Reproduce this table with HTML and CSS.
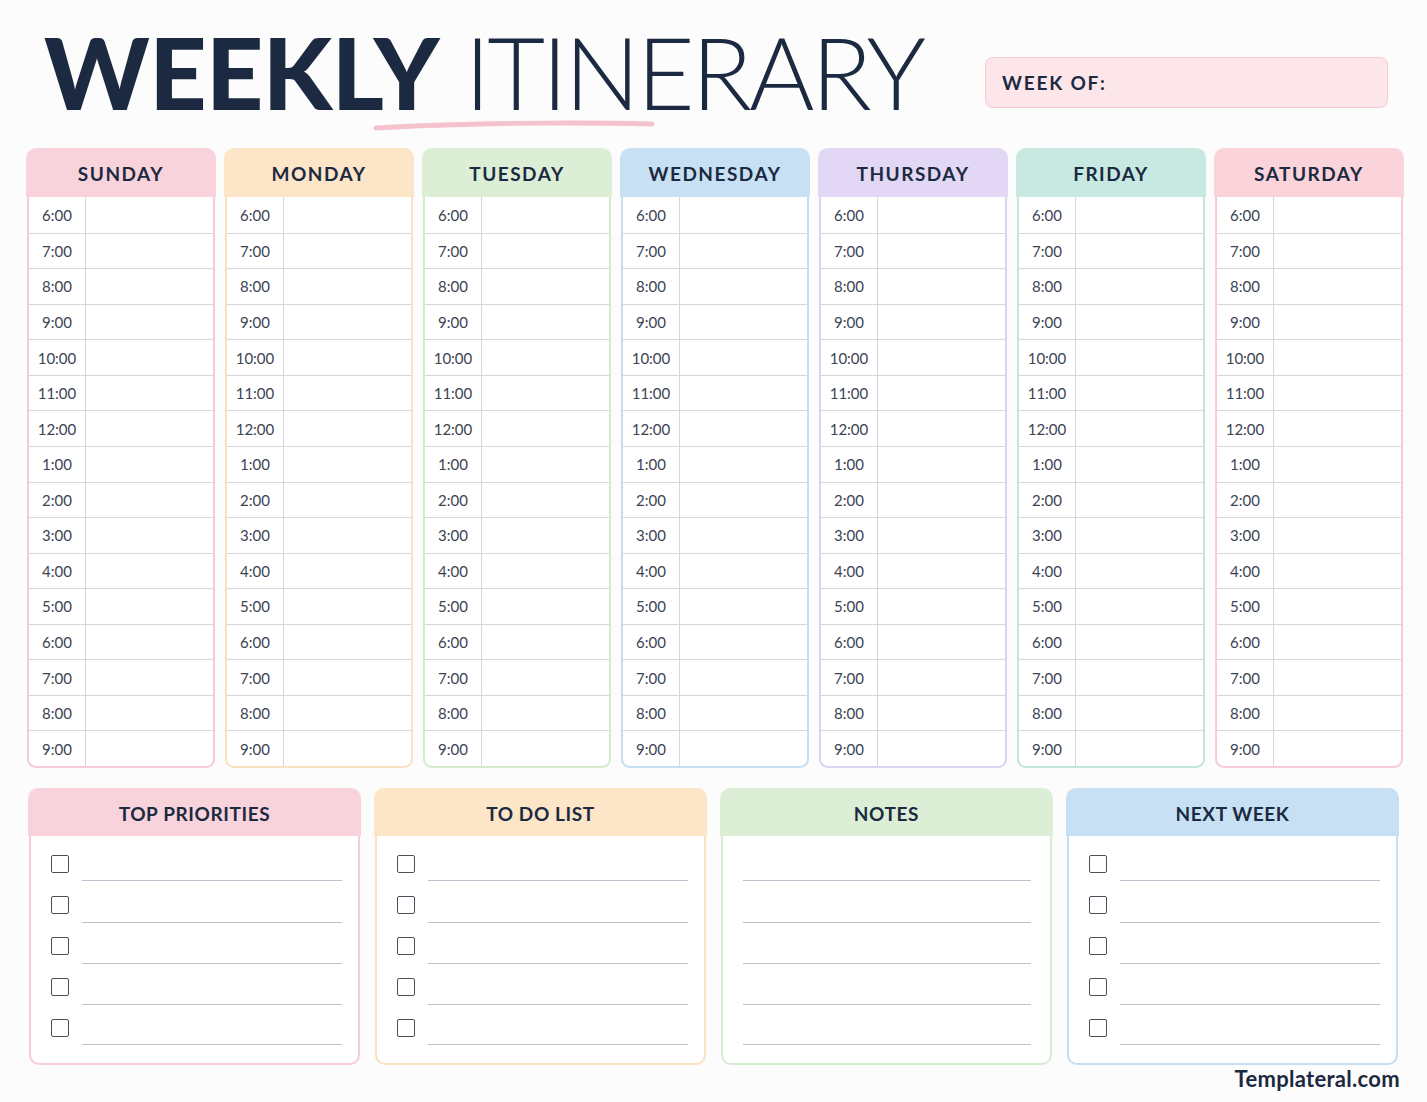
FILE: index.html
```html
<!DOCTYPE html>
<html lang="en">
<head>
<meta charset="utf-8">
<title>Weekly Itinerary</title>
<link rel="stylesheet" href="styles.css">
</head>
<body>
<div class="page">
  <header class="top">
    <div class="title-wrap">
      <h1 class="title"><span class="bold">WEEKLY</span> <span class="light">ITINERARY</span></h1>
      <svg class="swoosh" width="282" height="14" viewBox="0 0 282 14"><path d="M3 9 C 80 4, 200 3, 279 5" fill="none" stroke="#f5c3ce" stroke-width="5" stroke-linecap="round"/></svg>
    </div>
    <div class="week-of">WEEK OF:</div>
  </header>

  <section class="days">
    <div class="day sun"><div class="day-head">SUNDAY</div><div class="day-body"></div></div>
    <div class="day mon"><div class="day-head">MONDAY</div><div class="day-body"></div></div>
    <div class="day tue"><div class="day-head">TUESDAY</div><div class="day-body"></div></div>
    <div class="day wed"><div class="day-head">WEDNESDAY</div><div class="day-body"></div></div>
    <div class="day thu"><div class="day-head">THURSDAY</div><div class="day-body"></div></div>
    <div class="day fri"><div class="day-head">FRIDAY</div><div class="day-body"></div></div>
    <div class="day sat"><div class="day-head">SATURDAY</div><div class="day-body"></div></div>
  </section>

  <section class="panels">
    <div class="panel p-pink"><div class="panel-head">TOP PRIORITIES</div><ul class="panel-body checks"></ul></div>
    <div class="panel p-peach"><div class="panel-head">TO DO LIST</div><ul class="panel-body checks"></ul></div>
    <div class="panel p-green"><div class="panel-head">NOTES</div><ul class="panel-body lines"></ul></div>
    <div class="panel p-blue"><div class="panel-head">NEXT WEEK</div><ul class="panel-body checks"></ul></div>
  </section>

  <footer class="brand">Templateral.com</footer>
</div>
<script>
  var times = ["6:00","7:00","8:00","9:00","10:00","11:00","12:00","1:00","2:00","3:00","4:00","5:00","6:00","7:00","8:00","9:00"];
  document.querySelectorAll('.day-body').forEach(function (b) {
    times.forEach(function (t) {
      var r = document.createElement('div'); r.className = 'slot';
      var a = document.createElement('div'); a.className = 'time'; a.textContent = t;
      var c = document.createElement('div'); c.className = 'fill';
      r.appendChild(a); r.appendChild(c); b.appendChild(r);
    });
  });
  document.querySelectorAll('.panel-body').forEach(function (ul) {
    var check = ul.classList.contains('checks');
    for (var i = 0; i < 5; i++) {
      var li = document.createElement('li'); li.className = 'item';
      if (check) { var box = document.createElement('span'); box.className = 'box'; li.appendChild(box); }
      var ln = document.createElement('span'); ln.className = 'rule'; li.appendChild(ln);
      ul.appendChild(li);
    }
  });
</script>
</body>
</html>
```

FILE: styles.css
```css
* { box-sizing: border-box; }
html, body { margin: 0; padding: 0; }
body {
  background: #fcfcfd;
  font-family: "Lato", "Noto Sans", sans-serif;
  color: #1b2a41;
  width: 1427px;
  height: 1102px;
  overflow: hidden;
}
.page { width: 1427px; }

/* Top */
.top {
  height: 148px;
  display: flex;
  justify-content: space-between;
  align-items: flex-start;
  padding: 21px 39px 0 44px;
}
.title-wrap { display: flex; flex-direction: column; }
.title {
  margin: 0;
  font-size: 100px;
  line-height: 100px;
  white-space: nowrap;
  color: #1b2a41;
  font-weight: 400;
}
.title .bold { font-weight: 900; letter-spacing: -0.6px; }
.title .light { font-weight: 300; letter-spacing: -3.3px; }
.swoosh { display: block; margin: -2px 0 0 329px; }
.week-of {
  margin-top: 36px;
  width: 403px;
  height: 51px;
  background: #fde6ea;
  border: 1.5px solid #f7c9d1;
  border-radius: 8px;
  padding-left: 16px;
  display: flex;
  align-items: center;
  font-size: 19px;
  font-weight: 700;
  letter-spacing: 1.8px;
  color: #1b2a41;
}

/* Days */
.days {
  display: grid;
  grid-template-columns: repeat(7, 190px);
  column-gap: 8px;
  padding-left: 26px;
}
.day { display: flex; flex-direction: column; }
.day-head {
  height: 49px;
  border-radius: 10px 10px 0 0;
  display: flex;
  align-items: center;
  justify-content: center;
  font-size: 19px;
  font-weight: 700;
  letter-spacing: 1.5px;
  color: #1b2a41;
  padding-top: 1px;
}
.day-body {
  margin: 0 1px;
  height: 571px;
  background: #fff;
  border: 2px solid;
  border-top: 0;
  border-radius: 0 0 9px 9px;
  display: grid;
  grid-template-rows: repeat(16, 1fr);
  overflow: hidden;
}
.slot {
  display: grid;
  grid-template-columns: 57px 1fr;
  border-top: 1.5px solid #d4d7df;
}
.slot:first-child { border-top: 0; }
.time {
  border-right: 1.5px solid #d4d7df;
  display: flex;
  align-items: center;
  justify-content: center;
  font-size: 15px;
  color: #3c4353;
}
.sun .day-head { background: #f9d3db; } .sun .day-body { border-color: #f6cbd3; }
.mon .day-head { background: #fde5c8; } .mon .day-body { border-color: #fbe0c2; }
.tue .day-head { background: #dcefd6; } .tue .day-body { border-color: #d3ebcc; }
.wed .day-head { background: #c7e0f3; } .wed .day-body { border-color: #c5def1; }
.thu .day-head { background: #e2d7f4; } .thu .day-body { border-color: #ddd2f1; }
.fri .day-head { background: #c7e9e1; } .fri .day-body { border-color: #c2e6dd; }
.sat .day-head { background: #fbd3da; } .sat .day-body { border-color: #f8ccd4; }

/* Panels */
.panels {
  margin-top: 20px;
  display: grid;
  grid-template-columns: repeat(4, 333px);
  column-gap: 13px;
  padding-left: 28px;
}
.panel { display: flex; flex-direction: column; }
.panel-head {
  height: 48px;
  border-radius: 10px 10px 0 0;
  display: flex;
  align-items: center;
  justify-content: center;
  font-size: 19px;
  font-weight: 700;
  letter-spacing: 0.6px;
  color: #1b2a41;
  padding-top: 2px;
}
.panel-body {
  list-style: none;
  margin: 0 1px;
  height: 229px;
  background: #fff;
  border: 2px solid;
  border-top: 0;
  border-radius: 0 0 10px 10px;
  padding: 10px 16px 0 20px;
}
.item {
  height: 41px;
  display: flex;
  align-items: flex-end;
}
.box {
  align-self: flex-start;
  margin-top: 9px;
  width: 18px;
  height: 18px;
  border: 1.8px solid #4a4f5a;
  border-radius: 2px;
  flex: none;
  margin-right: 13px;
}
.rule {
  flex: 1;
  margin-bottom: 6px;
  border-bottom: 1.5px solid #bcc2cd;
}
.item:nth-child(2) .rule, .item:nth-child(3) .rule, .item:nth-child(4) .rule { margin-bottom: 5px; }
.lines { padding-left: 20px; padding-right: 19px; }
.p-pink .panel-head { background: #f9d3db; } .p-pink .panel-body { border-color: #f7cdd5; }
.p-peach .panel-head { background: #fde5c8; } .p-peach .panel-body { border-color: #fbe0c2; }
.p-green .panel-head { background: #dcefd6; } .p-green .panel-body { border-color: #d6ecd0; }
.p-blue .panel-head { background: #c7e0f3; } .p-blue .panel-body { border-color: #c5def1; }

.brand {
  text-align: right;
  padding-right: 27px;
  margin-top: 2px;
  font-size: 22px;
  line-height: 24px;
  font-weight: 700;
  letter-spacing: 0.3px;
  color: #1b2a41;
}
```
